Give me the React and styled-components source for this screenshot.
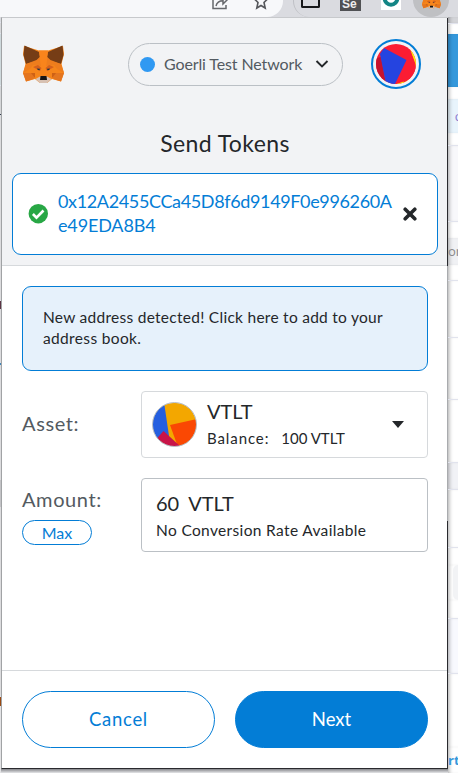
import React from "react";
import styled, { createGlobalStyle } from "styled-components";

const GlobalStyle = createGlobalStyle`
  * { box-sizing: border-box; }
  body { margin: 0; overflow: hidden; background: #fff; }
  button { font: inherit; cursor: pointer; padding: 0; margin: 0; }
`;

const Screen = styled.div`
  width: 458px;
  height: 773px;
  overflow: hidden;
  display: grid;
  grid-template-rows: 17px 756px;
  font-family: Lato, "Open Sans", sans-serif;
  color: #24272a;
`;

/* Browser toolbar */
const Toolbar = styled.div`
  display: flex;
  background: #dadbe0;
  overflow: hidden;
`;
const AddressBar = styled.div`
  width: 283px;
  height: 17px;
  background: #f7f8fa;
  border-bottom-right-radius: 16px;
  padding-left: 210px;
  display: flex;
  gap: 23px;
`;
const ToolbarIcon = styled.svg`
  display: block;
  flex: none;
`;
const Extensions = styled.div`
  flex: 1;
  display: flex;
  margin-left: 10px;
  border-left: 1px solid #bfc0c5;
  border-bottom-left-radius: 16px;
  padding-left: 7px;
`;
const WindowGlyph = styled.div`
  width: 19px;
  height: 8px;
  border: 2px solid #17181a;
  border-top: 0;
  border-radius: 0 0 2px 2px;
`;
const SeleniumTile = styled.div`
  width: 21px;
  height: 11px;
  margin-left: 20px;
  background: #505154;
  color: #eee;
  font: bold 12px/9px "Liberation Sans", sans-serif;
  padding-left: 2px;
`;
const TealTile = styled.div`
  width: 20px;
  height: 10px;
  margin-left: 20px;
  background: #fff;
  display: flex;
  justify-content: center;
  overflow: hidden;
`;
const ActiveExtension = styled.div`
  width: 36px;
  height: 34px;
  margin: -17px 0 0 12px;
  border-radius: 50%;
  background: #bfc0c3;
  display: flex;
  justify-content: center;
  align-items: center;
`;

/* Page around the popup */
const Body = styled.div`
  display: grid;
  grid-template-columns: 1px 447px 10px;
`;
const Sliver = styled.div`
  background: #e3e3e5;
  display: flex;
  flex-direction: column;
  overflow: hidden;
`;
const Band = styled.div`
  flex: none;
  height: ${(p) => p.$h}px;
  background: ${(p) => p.$bg || "#fff"};
  border-bottom: ${(p) => (p.$line ? "1px solid #e1e3ed" : "0")};
  color: ${(p) => p.$color || "#888"};
  font: ${(p) => p.$weight || 400} 13px/${(p) => p.$h}px "Open Sans", sans-serif;
  white-space: nowrap;
  overflow: hidden;
`;
const RightSliver = styled(Sliver)`
  background: #fff;
`;
const ShadedBand = styled(Band)`
  box-shadow: inset 4px 0 4px -3px rgba(0, 0, 0, 0.35);
`;
const StubBand = styled(ShadedBand)`
  padding-left: 5px;
`;
const Stub = styled(Band)`
  border-radius: 5px 0 0 5px;
`;

/* Popup */
const PopupColumn = styled.div`
  display: flex;
  flex-direction: column;
  min-width: 0;
`;
const Popup = styled.main`
  display: flex;
  height: 752px;
  border: 1px solid #a1a3a5;
  border-top-color: #c7c9cc;
  border-right: 0;
  border-bottom-color: #292a2e;
`;
const PopupContent = styled.div`
  flex: 1;
  min-width: 0;
  display: flex;
  flex-direction: column;
  background: #fff;
`;
const PopupEdge = styled.div`
  flex: none;
  width: 1px;
  background: linear-gradient(#292a2e 248px, #a9abae 248px, #a9abae 503px, #292a2e 503px);
`;
const PopupShadow = styled.div`
  height: 4px;
  background: linear-gradient(#85868a, #e5e6e8);
`;
const Top = styled.header`
  height: 248px;
  background: #f2f3f5;
  border-bottom: 1px solid #d6d9dc;
  padding: 0 9px 0 10px;
`;
const AppHeader = styled.div`
  display: flex;
  align-items: center;
  height: 92px;
  padding: 0 17px 0 11px;
`;
const Network = styled.button`
  width: 215px;
  height: 43px;
  margin-left: 64px;
  margin-right: auto;
  border: 1px solid #bbc0c5;
  border-radius: 22px;
  background: transparent;
  display: flex;
  align-items: center;
  padding: 0 13px 0 11px;
`;
const NetworkDot = styled.span`
  width: 15px;
  height: 15px;
  border-radius: 50%;
  background: #3099f2;
  margin-right: 9px;
`;
const Text = styled.span`
  display: block;
  white-space: nowrap;
  font-size: ${(p) => p.$size}px;
  line-height: ${(p) => p.$lh}px;
  letter-spacing: ${(p) => p.$ls || 0}px;
  color: ${(p) => p.$color || "#24272a"};
  font-weight: ${(p) => p.$weight || 400};
`;
const Chevron = styled.svg`
  margin-left: auto;
`;
const Account = styled.div`
  width: 50px;
  height: 50px;
  border: 2px solid #037dd6;
  border-radius: 50%;
  display: grid;
  place-items: center;
`;
const Title = styled.h1`
  margin: 18px 0 0;
  height: 45px;
  font-size: 23px;
  font-weight: 400;
  line-height: 31px;
  letter-spacing: 0.4px;
  text-align: center;
`;
const Recipient = styled.div`
  height: 82px;
  border: 1px solid #037dd6;
  border-radius: 9px;
  background: #fff;
  display: flex;
  align-items: center;
  padding: 0 20px 0 15px;
`;
const Address = styled.div`
  width: 345px;
  margin-left: 10px;
  padding-bottom: 2px;
`;

const Form = styled.section`
  flex: 1;
  padding: 20px 19px 0 20px;
`;
const Notice = styled.div`
  height: 85px;
  border: 1px solid #037dd6;
  border-radius: 9px;
  background: #e6f1fb;
  padding: 20px;
  margin-bottom: 20px;
`;
const Row = styled.div`
  display: grid;
  grid-template-columns: 119px 287px;
  margin-bottom: 20px;
`;
const Label = styled.div`
  display: flex;
  flex-direction: column;
  align-items: flex-start;
  padding-top: ${(p) => p.$top}px;
`;
const Field = styled.div`
  height: ${(p) => p.$h}px;
  border: 1px solid ${(p) => p.$border};
  border-radius: 4px;
  display: flex;
  align-items: center;
  padding: ${(p) => p.$pad};
`;
const Caret = styled.svg`
  margin-left: auto;
`;
const Stack = styled.div`
  margin-left: ${(p) => p.$ml || 0}px;
`;
const Inline = styled.div`
  display: flex;
  gap: ${(p) => p.$gap}px;
`;
const MaxButton = styled.button`
  width: 70px;
  height: 25px;
  margin-top: 7px;
  border: 1px solid #037dd6;
  border-radius: 13px;
  background: #fff;
  display: flex;
  justify-content: center;
  align-items: center;
`;
const Footer = styled.footer`
  height: 98px;
  border-top: 1px solid #d6d9dc;
  padding: 20px 19px 20px 20px;
  display: grid;
  grid-template-columns: 193px 193px;
  gap: 20px;
`;
const FooterButton = styled.button`
  height: 57px;
  border-radius: 29px;
  border: 1px solid #037dd6;
  background: ${(p) => (p.$primary ? "#037dd6" : "#fff")};
  display: flex;
  justify-content: center;
  align-items: center;
  padding-bottom: 2px;
`;

function Fox({ width, height }) {
  return (
    <svg width={width} height={height} viewBox="0 0 41 38" preserveAspectRatio="none">
      <path d="M1 1 16 5.500H25L40 1 41 9 38.500 19 41 28 38 36.500 29 34 24 38H17L12 34 3 36.500 0 28 2.500 19 0 9Z" fill="#f6851b" />
      <path d="M1.500 .5 16 7 17 12 13.500 16 3 19 .5 10Z" fill="#763d16" />
      <path d="M39.500 .5 25 7 24 12 27.500 16 38 19 40.500 10Z" fill="#763d16" />
      <path d="M3 19 13.500 15 17 12 18 21 10 20 7 24 0 28Z" fill="#ee7d1d" />
      <path d="M38 19 27.500 15 24 12 23 21 31 20 34 24 41 28Z" fill="#ee7d1d" />
      <path d="M16 5.500H25L23 23H18Z" fill="#f9841c" />
      <path d="M10 22 15 20 18.500 23 17 26ZM31 22 26 20 22.500 23 24 26Z" fill="#d5611d" />
      <path d="M0 28H12L10.500 34 3 36.500ZM41 28H29L30.500 34 38 36.500Z" fill="#e4751f" />
      <path d="M12 28V33L8 28ZM29 28V33L33 28Z" fill="#cd6116" />
      <path d="M12.500 34 17 31.500H24L28.500 34 24 38H17Z" fill="#d7c1b3" />
      <path d="M14 23.500 17 23.700 16.500 25.300 14.800 25ZM27 23.500 24 23.700 24.500 25.300 26.200 25Z" fill="#233447" />
      <path d="M17.500 31H23.500L24 35H17Z" fill="#161616" />
    </svg>
  );
}

const LABEL = "#535a61";
const BLUE = "#037dd6";

export default function App() {
  return (
    <Screen>
      <GlobalStyle />
      <Toolbar>
        <AddressBar>
          <ToolbarIcon width="20" height="11" viewBox="0 0 20 11" fill="none" stroke="#66686c" strokeWidth="1.500">
            <path d="M3 0V8.500H16V5" />
            <path d="M6 6C7 2 10 .8 13 .8V4L19-2" />
          </ToolbarIcon>
          <ToolbarIcon width="16" height="11" viewBox="-1 0 16 11" fill="none" stroke="#55575b" strokeWidth="1.600">
            <path d="M.5-1 4 2.500 2.800 8 7 5.500 11.200 8 10 2.500 13.500-1" />
          </ToolbarIcon>
        </AddressBar>
        <Extensions>
          <WindowGlyph />
          <SeleniumTile>Se</SeleniumTile>
          <TealTile>
            <ToolbarIcon width="18" height="8" viewBox="0 0 18 8">
              <circle cx="9" cy="-1.500" r="6.300" fill="none" stroke="#138585" strokeWidth="4" />
            </ToolbarIcon>
          </TealTile>
          <ActiveExtension><Fox width={19} height={18} /></ActiveExtension>
        </Extensions>
      </Toolbar>
      <Body>
        <Sliver>
          <Band $h={6} $bg="#dadbe0" $line />
          <Band $h={11} $bg="#d8d8da" $line />
          <Band $h={52} $bg="#cfd9dc" $line />
          <Band $h={28} $bg="#d5d6d8" />
          <Band $h={1} $bg="#333d50" />
          <Band $h={186} $bg="#dcdcde" $line />
          <Band $h={8} $bg="#5b3444" />
          <Band $h={54} $bg="#dcdcde" />
          <Band $h={2} $bg="#4285b8" />
          <Band $h={115} $bg="#dcdcde" />
          <Band $h={27} $bg="#c3c3c6" />
          <Band $h={190} $bg="#dcdcde" $line />
          <Band $h={9} $bg="#9a4a12" />
        </Sliver>
        <PopupColumn>
          <Popup>
            <PopupContent>
              <Top>
                <AppHeader>
                  <Fox width={41} height={38} />
                  <Network>
                    <NetworkDot />
                    <Text $size={16} $lh={20} $ls={-0.12} $color={LABEL}>Goerli Test Network</Text>
                    <Chevron width="14" height="10" viewBox="0 0 14 10" fill="none" stroke="#24272a" strokeWidth="1.900">
                      <path d="M1.500 2 7 7.500 12.500 2" />
                    </Chevron>
                  </Network>
                  <Account>
                    <svg width="40" height="40" viewBox="0 0 40 40">
                      <defs><clipPath id="account"><circle cx="20" cy="20" r="20" /></clipPath></defs>
                      <g clipPath="url(#account)">
                        <path d="M0 0H40V40H0Z" fill="#fb1c33" />
                        <path d="M33 3 41 26V0ZM41 34 29 37 18 41H41Z" fill="#ffed08" />
                        <path d="M34 5 39.500 20 40 31 28 38.500 20 20Z" fill="#fb1c33" />
                        <path d="M0 14 5 13 10 40H0Z" fill="#c5132e" />
                        <path d="M8 4 30.500 16 19 40H10L4 10Z" fill="#2544e0" />
                      </g>
                    </svg>
                  </Account>
                </AppHeader>
                <Title>Send Tokens</Title>
                <Recipient>
                  <svg width="20" height="20" viewBox="0 0 20 20">
                    <circle cx="10.300" cy="9.700" r="9.700" fill="#28a745" />
                    <path d="M4.900 10 8.500 13.700 15.500 6.500" fill="none" stroke="#fff" strokeWidth="2.600" />
                  </svg>
                  <Address>
                    <Text $size={18} $lh={24} $ls={-0.36} $color={BLUE}>0x12A2455CCa45D8f6d9149F0e996260A</Text>
                    <Text $size={18} $lh={24} $ls={-0.15} $color={BLUE}>e49EDA8B4</Text>
                  </Address>
                  <svg width="14" height="14" viewBox="0 0 14 14" stroke="#24272a" strokeWidth="3.600" strokeLinecap="round">
                    <path d="M2.200 2.200 11.800 11.800M11.800 2.200 2.200 11.800" />
                  </svg>
                </Recipient>
              </Top>
              <Form>
                <Notice>
                  <Text $size={15.5} $lh={21} $ls={0.27}>New address detected! Click here to add to your</Text>
                  <Text $size={15.5} $lh={21} $ls={0.35}>address book.</Text>
                </Notice>
                <Row>
                  <Label $top={19}><Text $size={20} $lh={26} $ls={0.6} $color={LABEL}>Asset:</Text></Label>
                  <Field $h={67} $border="#d6d9dc" $pad="0 21px 0 10px">
                    <svg width="45" height="45" viewBox="0 0 45 45">
                      <defs><clipPath id="token"><circle cx="22.500" cy="22.500" r="21.800" /></clipPath></defs>
                      <g clipPath="url(#token)">
                        <path d="M0 0H45V45H0Z" fill="#f3a700" />
                        <path d="M0 0H12L17 34 0 40Z" fill="#255fe0" />
                        <path d="M18 23 45 17V45H26Z" fill="#fa4803" />
                        <path d="M11.500 29 29 45H0V42Z" fill="#c81448" />
                      </g>
                      <circle cx="22.500" cy="22.500" r="22" fill="none" stroke="#b6bdc7" />
                    </svg>
                    <Stack $ml={10}>
                      <Text $size={20} $lh={27}>VTLT</Text>
                      <Inline $gap={12}>
                        <Text $size={15} $lh={27} $ls={0.9}>Balance:</Text>
                        <Text $size={15} $lh={27}>100 VTLT</Text>
                      </Inline>
                    </Stack>
                    <Caret width="15" height="8" viewBox="0 0 15 8"><path d="M1 0H13L7 7Z" fill="#24272a" /></Caret>
                  </Field>
                </Row>
                <Row>
                  <Label $top={7}>
                    <Text $size={20} $lh={28} $ls={0.6} $color={LABEL}>Amount:</Text>
                    <MaxButton><Text $size={16} $lh={20} $color={BLUE}>Max</Text></MaxButton>
                  </Label>
                  <Field $h={74} $border="#bbc0c5" $pad="3px 14px 0">
                    <Stack>
                      <Inline $gap={9}>
                        <Text $size={20} $lh={27}>60</Text>
                        <Text $size={20} $lh={27}>VTLT</Text>
                      </Inline>
                      <Text $size={15.5} $lh={27} $ls={0.35}>No Conversion Rate Available</Text>
                    </Stack>
                  </Field>
                </Row>
              </Form>
              <Footer>
                <FooterButton><Text $size={18.5} $lh={24} $ls={0.7} $color={BLUE}>Cancel</Text></FooterButton>
                <FooterButton $primary><Text $size={18.5} $lh={24} $color="#fff">Next</Text></FooterButton>
              </Footer>
            </PopupContent>
            <PopupEdge />
          </Popup>
          <PopupShadow />
        </PopupColumn>
        <RightSliver>
          <ShadedBand $h={7} $bg="#d3d4d8" $line />
          <ShadedBand $h={10} />
          <ShadedBand $h={53} $bg="#3598db" />
          <ShadedBand $h={12} />
          <ShadedBand $h={34} $bg="#e8f4fc" $color="#8878cf">&nbsp;&nbsp;c</ShadedBand>
          <ShadedBand $h={13} $line />
          <ShadedBand $h={76} $bg="#f8f8fb" $line />
          <ShadedBand $h={16} />
          <ShadedBand $h={27} $bg="#f0f1f4">or</ShadedBand>
          <ShadedBand $h={16} $line />
          <ShadedBand $h={57} $line />
          <ShadedBand $h={62} $line />
          <ShadedBand $h={63} $line />
          <ShadedBand $h={27} $bg="#f1f2f6" $line />
          <ShadedBand $h={58} $line />
          <ShadedBand $h={17} />
          <StubBand $h={35}><Stub $h={35} $bg="#f2f3f5" /></StubBand>
          <ShadedBand $h={19} $line />
          <ShadedBand $h={55} $bg="#f8f9fe" $line />
          <ShadedBand $h={73} />
          <ShadedBand $h={26} $color="#3598db" $weight={700}>rt</ShadedBand>
        </RightSliver>
      </Body>
    </Screen>
  );
}
